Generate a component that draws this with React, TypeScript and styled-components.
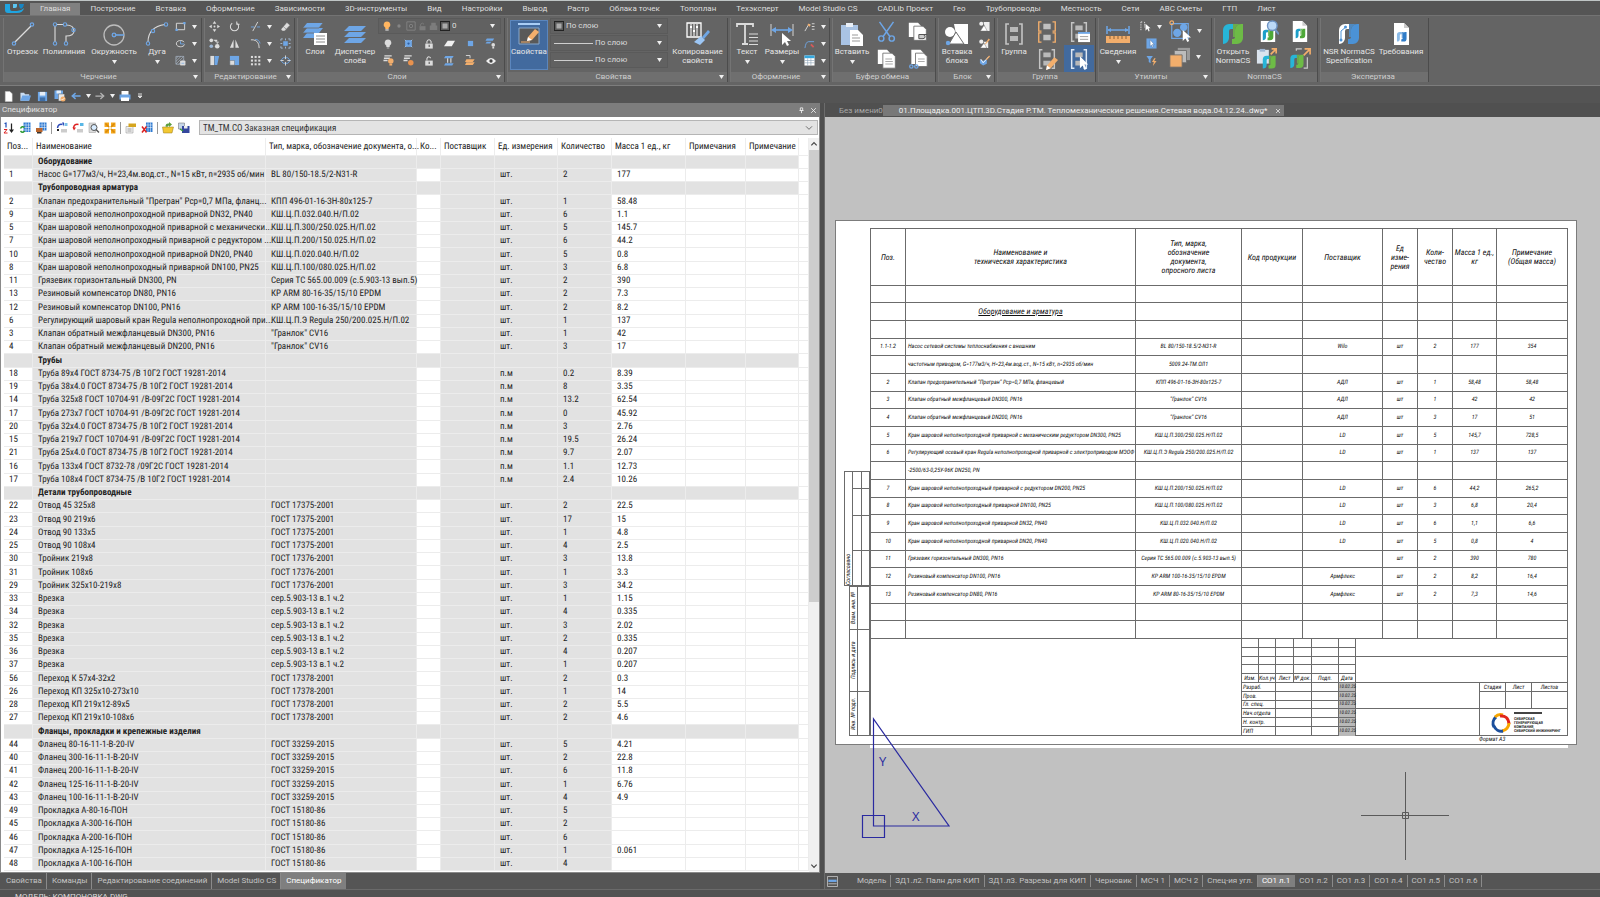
import React from "react";
import styled, { createGlobalStyle, css } from "styled-components";

/* ------------------------------------------------------------------ */
/* Theme                                                              */
/* ------------------------------------------------------------------ */

const uiFont = 'Roboto, "Noto Sans", sans-serif';
const gridFont = '"Roboto Condensed", Roboto, "Liberation Sans", sans-serif';
const LIGHT = "#dcdcdc";
const BLUE = "#6ea6e6";
const ORANGE = "#f2ae6c";
const INK = "#6b6b6b";

const GlobalStyle = createGlobalStyle`
  *, *::before, *::after { box-sizing: border-box; }
  body { margin: 0; background: #555; font: 8px/10px ${uiFont}; color: #dedede; }
  button, select, input { font: inherit; color: inherit; margin: 0; padding: 0; border: 0; background: none; }
  button { cursor: pointer; }
  a { color: inherit; text-decoration: none; }
  svg { display: block; flex: none; }
`;

const App$ = styled.div`
  display: flex;
  flex-direction: column;
  min-height: 100vh;
  overflow: hidden;
`;

/* ------------------------------------------------------------------ */
/* Icons                                                              */
/* ------------------------------------------------------------------ */

const bigDoc = (
  <>
    <path d="M5 1h10l5 5v17H5z" fill="#fff" />
    <path d="M15 1v5h5" fill="#ccc" />
  </>
);
const normaMark = (a: string, b: string) => (
  <>
    <path d="M2 22V8a6 6 0 0 1 6-6h4v5h-2a2 2 0 0 0-2 2v7a6 6 0 0 1-6 6z" fill={a} />
    <path d="M11 22v-5h1a2 2 0 0 0 2-2V8a6 6 0 0 1 6-6h2v14a6 6 0 0 1-6 6z" fill={b} />
    <path d="M12 2h8a6 6 0 0 0-6 6v7h-2z" fill={b} opacity=".8" />
  </>
);
const bracket = (c: string) => (
  <>
    <path d="M7 2H4v20h3M17 2h3v20h-3" fill="none" stroke={c} strokeWidth="1.6" />
    <path d="M8 5h8v5H8zM8 14h8v5H8z" fill="#b9b9b9" />
  </>
);
const cursor = <path d="M13 9v13l3-3 2 5 2-1-2-5h4z" fill="#fff" />;

const drawings: Record<string, React.ReactNode> = {
  line: (
    <g fill="none" stroke={LIGHT} strokeWidth="1.2">
      <path d="M4 20 20 4" />
      <g stroke={BLUE}><circle cx="3" cy="21.500" r="1.700" /><circle cx="21" cy="2.500" r="1.700" /></g>
    </g>
  ),
  polyline: (
    <g fill="none" stroke={LIGHT} strokeWidth="1.1">
      <path d="M3 20V4M5 2.500h7M14 3q8 0 8 6 0 5-8 5v6" />
      <g stroke={BLUE}><circle cx="3" cy="2.500" r="1.700" /><circle cx="3" cy="21.500" r="1.700" /><circle cx="13" cy="2.500" r="1.700" /><circle cx="21.500" cy="8" r="1.700" /><circle cx="14" cy="21.500" r="1.700" /></g>
    </g>
  ),
  circle: (
    <g fill="none" stroke="#bdbdbd" strokeWidth="1.3">
      <circle cx="12" cy="13" r="10" />
      <g stroke={BLUE}><circle cx="12" cy="13" r="1.800" fill={INK} /><path d="M14 13h8" strokeWidth="1.6" /></g>
    </g>
  ),
  arc: (
    <g fill="none" stroke={LIGHT} strokeWidth="1.1">
      <path d="M3 20Q3 5 20 2.500" />
      <g stroke={BLUE}><circle cx="3" cy="21.500" r="1.700" /><circle cx="8" cy="9" r="1.700" fill={INK} /><circle cx="21" cy="2.500" r="1.700" /></g>
    </g>
  ),
  rect: (
    <g fill="none" stroke={LIGHT} strokeWidth="2">
      <path d="M3 5h18v14H3z" />
      <g fill={BLUE} stroke="none"><path d="M1 17h5v5H1zM18 2h5v5h-5z" /></g>
    </g>
  ),
  ellipse: (
    <g fill="none" stroke={LIGHT} strokeWidth="2">
      <path d="M20 9C16 3 2 5 3 13s16 8 18 1" />
      <path d="M12 13V7M12 13h8" stroke={BLUE} />
    </g>
  ),
  hatch: (
    <g fill="none" stroke={LIGHT} strokeWidth="1.500">
      <path d="M2 3h17v17H2zM2 8l5-5M2 14 13 3M2 20 19 3M8 20 19 9" stroke="#a9b6c6" />
      <path d="M12 13h10v9H12z" fill={LIGHT} />
      <path d="M14 18h6" stroke={BLUE} />
    </g>
  ),
  move: (
    <g fill={LIGHT}>
      <path d="m12 0 4 6H8zM12 24l4-6H8zM0 12l6-4v8zM24 12l-6-4v8z" />
      <circle cx="12" cy="12" r="2" />
    </g>
  ),
  rotate: <path d="M7 5a9 9 0 1 0 10 0M17 1v6h6" fill="none" stroke={LIGHT} strokeWidth="2.200" />,
  trim: (
    <g fill="none" strokeWidth="2">
      <path d="M2 13h7M15 13h7" stroke={BLUE} /><path d="M6 22 17 2" stroke={LIGHT} />
    </g>
  ),
  eraser: <path d="M2 18 15 3l7 6L10 22H5zM7 12l7 6" fill={LIGHT} stroke={INK} strokeWidth="1.200" />,
  copy: (
    <g fill={LIGHT}>
      <circle cx="5" cy="5" r="4" /><circle cx="5" cy="18" r="4" fill="#9db7d6" /><circle cx="18" cy="18" r="5" /><path d="M9 4h9v7M14 8l4 5 4-5z" />
    </g>
  ),
  mirror: <path d="M10 3v18H2zM14 3v18h8z" fill={LIGHT} />,
  fillet: (
    <g fill="none" strokeWidth="2"><path d="M2 4h5q13 2 13 18" stroke={LIGHT} /><path d="M11 3q9 0 11 9" stroke={BLUE} /></g>
  ),
  explode: (
    <g><path d="M7 7h10v10H7z" fill={BLUE} /><path d="M2 2h4M2 2v4M22 2h-4M22 2v4M2 22h4M2 22v-4M22 22h-4M22 22v-4M12 1v4M12 19v4M1 12h4M19 12h4" stroke="#a7bdd6" strokeWidth="2" /></g>
  ),
  stretch: <g><path d="M3 2h8v20H3z" fill={LIGHT} /><path d="M12 2h10l-4 20h-6z" fill={BLUE} /></g>,
  scale: <g><path d="M2 2h20v20H2z" fill={BLUE} /><path d="M2 12h10v10H2z" fill={LIGHT} stroke={INK} /></g>,
  array: (
    <g fill={LIGHT}>{[2, 10, 18].map(x => [2, 10, 18].map(y => <rect key={`${x}-${y}`} x={x} y={y} width="4.500" height="4.500" />))}</g>
  ),
  break: <g fill="none" stroke={BLUE} strokeWidth="2"><path d="M7 6h10l5 6-5 6H7l-5-6z" /><path d="M12 1v8M12 15v8M1 12h7M16 12h7" stroke={LIGHT} /></g>,
  layers: (
    <g>
      <path d="M4 1h16l-4 5H0zM4 6h16l-4 5H0z" fill={BLUE} /><path d="M4 11h13l-4 5H0z" fill={BLUE} />
      <path d="M0 6h16l4-5M0 11h11" stroke={INK} strokeWidth=".8" fill="none" />
      <path d="M11 11h13v12H11z" fill="#fff" /><path d="M13 14h9M13 17h9M13 20h9" stroke="#8b8b8b" />
    </g>
  ),
  stack: <g fill={BLUE}><path d="M6 4h17l-5 5H1zM6 10h17l-5 5H1zM6 16h17l-5 5H1z" /></g>,
  bulb: (
    <g><path d="M12 1a8 8 0 0 1 4 15v3H8v-3a8 8 0 0 1 4-15z" fill="#ffb560" /><path d="M8 20h8v3H8z" fill={LIGHT} /></g>
  ),
  bulbOff: <g><path d="M12 1a8 8 0 0 1 4 15v3H8v-3a8 8 0 0 1 4-15z" fill={LIGHT} /><path d="M9 20h6v3H9z" fill="#aaa" /></g>,
  dot: <circle cx="12" cy="12" r="4" fill="#858585" />,
  dimFrame: <g fill="none" stroke="#858585" strokeWidth="2"><path d="M2 2h20v20H2z" /><circle cx="12" cy="12" r="4" /></g>,
  dimLock: <g fill="#7c7c7c"><path d="M4 11h16v11H4z" /><path d="M7 11V6q5-6 9 0" fill="none" stroke="#7c7c7c" strokeWidth="2.500" /></g>,
  dimPrint: <path d="M6 2h12v7h4v12H2V9h4z" fill="#7c7c7c" />,
  swatch: <g><path d="M1 1h22v22H1z" fill="#5a5a5a" stroke="#222" strokeWidth="2.500" /><path d="M6 6h12v12H6z" fill="#aaa" /></g>,
  freeze: <g><path d="M3 3h18v18H3z" fill={BLUE} /><circle cx="12" cy="12" r="3" fill="#2f5fa0" /><path d="M2 2l4 4M22 2l-4 4M2 22l4-4M22 22l-4-4" stroke="#a8c8ef" strokeWidth="2" /></g>,
  lock: <g fill={LIGHT}><path d="M3 11h18v12H3z" /><path d="M7 11V6q5-8 10 0v5" fill="none" stroke={LIGHT} strokeWidth="2.500" /><path d="M11 14h3v5h-3z" fill={INK} /></g>,
  unlock: <g fill={LIGHT}><path d="M3 11h18v12H3z" /><path d="M7 11V6q4-8 9-1" fill="none" stroke={LIGHT} strokeWidth="2.500" /><path d="M11 14h3v5h-3z" fill={INK} /></g>,
  slab: <path d="M8 6h16l-7 12H0z" fill="#f0f0f0" />,
  cube: <path d="M5 5h14v14H5z" fill={BLUE} />,
  layerPaint: <g><path d="M4 1h16l-3 5H1zM4 8h10l-3 4H1z" fill={BLUE} /><circle cx="18" cy="15" r="4" fill={LIGHT} /><path d="M16 19h4v4h-4z" fill={LIGHT} /></g>,
  layerBulb: <g><path d="M3 2h16M2 7h13M1 12h9" stroke={LIGHT} strokeWidth="3" /><circle cx="17" cy="13" r="6" fill={ORANGE} /><path d="M14 19h6v4h-6z" fill={ORANGE} /></g>,
  layerSun: <g><path d="M3 2h16M2 7h13M1 12h9" stroke={LIGHT} strokeWidth="3" /><circle cx="17" cy="17" r="6" fill="#e8924e" /></g>,
  layerJoin: <g><path d="M3 2h18l-3 5H0zM3 18h18l-3 5H0z" fill={BLUE} /><path d="M8 7v10M15 7v10" stroke={LIGHT} strokeWidth="2.500" /></g>,
  layerOpen: <g><path d="M3 9h18l-4 6H0zM3 16h18l-4 6H0z" fill={ORANGE} /><path d="M2 1h9v6" stroke={LIGHT} strokeWidth="2" fill="none" /></g>,
  eye: <g><path d="M0 12q12-15 24 0-12 15-24 0z" fill="#eee" /><circle cx="12" cy="12" r="4" fill="#444" /></g>,
  properties: (
    <g>
      <path d="M1 1h22v2H1z" fill="#a9cdf5" /><path d="M2 6h20v16H2z" fill="#595959" stroke="#88a8cc" />
      <path d="m11 15 7-8 4 3-7 8-5 1z" fill={ORANGE} /><path d="m11 15 4 3-5 1z" fill="#fff" /><path d="M4 20h9" stroke={ORANGE} />
    </g>
  ),
  matchProps: (
    <g>
      <path d="M1 1h14v14H1z" fill="none" stroke="#fff" strokeWidth="1.300" />
      <path d="M5 2v12M8 2v12M11 2v12" stroke="#fff" /><path d="M4 5h2M7 9h2M10 5h2" stroke="#fff" strokeWidth="2" />
      <path d="m22 8 2 2-6 7-2-2z" fill={BLUE} /><path d="M15 14 19 18 14 23 8 20z" fill="#9cc6f5" />
    </g>
  ),
  text: (
    <g fill="none" stroke={LIGHT} strokeWidth="1.800"><path d="M2 5V2h16v3M10 2v20M7 22h6" /><path d="M14 12h9M14 15.500h9M14 19h9M14 22.500h9" strokeWidth="1" /></g>
  ),
  dims: (
    <g><path d="M1 2v12M23 2v12" stroke="#bbb" strokeWidth="1.300" /><path d="M3 8h18" stroke={BLUE} strokeWidth="1.600" /><path d="m1 8 5-3v6zM23 8l-5-3v6z" fill={BLUE} /><path d="M12 11v12l3-3 2 4 2-1-2-4h4z" fill="#fff" /></g>
  ),
  leader: <g fill="none" stroke={LIGHT} strokeWidth="2"><path d="M2 22 10 8h4M17 6h6M17 12h6M17 18h6" /><path d="M9 7l4 4" stroke={ORANGE} strokeWidth="4" /></g>,
  spline: <g fill="none" strokeWidth="2"><path d="M2 22Q4 8 10 8h12" stroke={BLUE} /><path d="M15 14l6 6" stroke="#d65a5a" strokeWidth="4" /></g>,
  table: <g><path d="M1 1h22v22H1z" fill="#fff" /><path d="M1 1h22v6H1z" fill="#35a7dd" /><path d="M8 7v16M15 7v16M1 12h22M1 17h22" stroke="#8ba0b5" strokeWidth="1.300" /></g>,
  paste: (
    <g><path d="M1 3h17v20H1z" fill="#a9c3e4" /><path d="M6 1h7v4H6z" fill="#e9eff7" /><path d="M10 8h8l5 5v11H10z" fill="#fff" /><path d="M12 13h6M12 16h8M12 19h8" stroke="#999" /></g>
  ),
  cut: (
    <g fill="none" stroke={BLUE} strokeWidth="1.700"><path d="M4 1l12 17M20 1 8 18" /><circle cx="6" cy="20" r="3" /><circle cx="18" cy="20" r="3" /></g>
  ),
  copyLink: (
    <g><path d="M1 1h11l4 4v13H1z" fill="#fff" /><path d="M7 5h11l4 4v13H7z" fill="#fff" stroke={INK} /><path d="M13 15h5a2 2 0 0 1 0 5h-5zM18 15h5" fill="#ccc" stroke="#555" strokeWidth="1.200" /></g>
  ),
  copyDocs: (
    <g><path d="M1 1h11l4 4v13H1z" fill="#fff" /><path d="M7 5h11l4 4v14H7z" fill="#fff" stroke={INK} /><path d="M10 12h8M10 15h9M10 18h9" stroke="#999" /></g>
  ),
  cutDocs: (
    <g><path d="M4 1h11l4 4v13H4z" fill="#fff" /><path d="M9 5h10l4 4v12H9z" fill="#fff" stroke={INK} /><path d="M12 12h8M12 15h8" stroke="#999" /><circle cx="4" cy="21" r="2" fill="none" stroke={BLUE} strokeWidth="1.500" /><circle cx="10" cy="21" r="2" fill="none" stroke={BLUE} strokeWidth="1.500" /></g>
  ),
  block: (
    <g><path d="M9 2h14v20H13z" fill="#fff" /><circle cx="5" cy="10" r="5" fill="#fff" /><path d="m11 10 8 12H4z" fill="#fff" stroke={INK} /><circle cx="3" cy="21" r="2.200" fill={BLUE} /></g>
  ),
  blockSmall: <g><path d="M10 2h13v20h-9z" fill="#eee" /><circle cx="5" cy="6" r="4.500" fill="#eee" /><path d="m11 9 7 13H3z" fill="#fff" stroke={INK} /></g>,
  blockEdit: <g><path d="M10 8h10v14h-6z" fill="#eee" /><circle cx="5" cy="8" r="4.500" fill="#eee" /><path d="m11 11 6 11H3z" fill="#fff" stroke={INK} /><path d="m21 1 3 3-9 9-3 1z" fill={ORANGE} /></g>,
  blockCheck: <g><path d="M2 9l7 4 8-4v10l-8 4-7-5z" fill={BLUE} /><path d="m4 9 5 8L21 4" fill="none" stroke="#fff" strokeWidth="2" /><path d="m22 1 2 2-7 8-2-1z" fill={ORANGE} /></g>,
  group: bracket("#c4c4c4"),
  ungroup: (
    <g fill="none" stroke={ORANGE} strokeWidth="1.500"><path d="M6 1H3v10h3M18 1h3v10h-3M6 13H3v10h3M18 13h3v10h-3" /><path d="M8 3h8v6H8zM8 15h8v6H8z" fill="#c0c0c0" stroke="none" /></g>
  ),
  groupList: <g>{bracket("#c4c4c4")}<path d="M11 12h13v11H11z" fill="#fff" /><path d="M11 12h13v2H11z" fill={BLUE} /><path d="M13 17h9M13 20h9" stroke="#999" /></g>,
  groupEdit: <g>{bracket("#c4c4c4")}<path d="m20 10 4 3-8 9-5 2 1-5z" fill={ORANGE} /><path d="m12 19 4 3-5 2z" fill="#fff" /></g>,
  groupSelect: <g>{bracket("#dfe9f5")}{cursor}</g>,
  info: <g><path d="M1 4v8M23 4v8" stroke={BLUE} strokeWidth="1.500" /><path d="M2 8h20" stroke={BLUE} strokeWidth="1.500" /><path d="m1 8 4-2v4zM23 8l-4-2v4z" fill={BLUE} /><path d="M0 14h24v7H0z" fill={ORANGE} /><path d="M4 14v3M8 14v3M12 14v3M16 14v3M20 14v3" stroke="#8d6236" /></g>,
  quickSel: <g><path d="M2 2v20M2 2h4M10 2v12" stroke={LIGHT} strokeWidth="2" strokeDasharray="3 2" /><path d="M12 6v15l4-4 3 6 2-1-2-6h4z" fill="#fff" /></g>,
  pick: <g><path d="M1 1h22v22H1z" fill={BLUE} /><path d="M9 4v14l3-3 2 5 2-1-2-5h4z" fill="#fff" stroke="#3b5d8a" strokeWidth=".8" /></g>,
  filter: <g><path d="M1 2h14l-5 7v9l-4-3V9z" fill={BLUE} /><path d="m18 7-5 8h4l-2 9 8-11h-5l3-6z" fill={ORANGE} /></g>,
  isolate: <g><path d="M3 4h18v16H3z" fill="none" stroke={BLUE} strokeWidth="1.300" /><circle cx="9" cy="14" r="4.500" fill={BLUE} /><circle cx="16" cy="8" r="4" fill={BLUE} /><circle cx="3" cy="3" r="2" fill="none" stroke={ORANGE} strokeWidth="1.300" /><path d="M15 11v12l3-3 2 4 2-1-2-4h4z" fill="#fff" /></g>,
  order: <g><path d="M10 1h14v14H10z" fill="#9b9b9b" /><path d="M6 4h14v14H6z" fill="#bcbcbc" stroke={INK} /><path d="M1 9h14v14H1z" fill={ORANGE} stroke={INK} /></g>,
  norma: normaMark("#27b5d8", "#6dbb46"),
  normaSearch: <g>{bigDoc}<g transform="translate(6 9) scale(.55)">{normaMark("#1d9fc9", "#4ea838")}</g><circle cx="17" cy="6" r="5" fill="#bcd9f6" stroke="#6f94c4" strokeWidth="1.500" /><path d="m20 10 4 5" stroke="#6f94c4" strokeWidth="2" /></g>,
  normaDoc: <g>{bigDoc}<g transform="translate(7 8) scale(.5)">{normaMark("#1d9fc9", "#4ea838")}</g></g>,
  normaPaste: <g><path d="M1 2h13v15H1z" fill="#dbe4ee" /><path d="M4 1h6v3H4z" fill="#9fb7d4" /><g transform="translate(6 7) scale(.7)">{normaMark("#27b5d8", "#6dbb46")}</g><path d="m16 7 6-6M17 1h5v5" stroke={ORANGE} strokeWidth="1.800" fill="none" /></g>,
  normaLink: <g><path d="M8 3V1h6M20 10v12h-4" stroke="#ccc" strokeWidth="1.300" fill="none" /><g transform="translate(0 6) scale(.72)">{normaMark("#27b5d8", "#6dbb46")}</g><path d="m16 8 6-6M17 1h6v6" stroke={ORANGE} strokeWidth="1.800" fill="none" /></g>,
  nsr: <g>{normaMark("#fff", "#4b92d6")}<path d="M4 19V9l5-4" stroke="#4b92d6" fill="none" /><circle cx="4" cy="18" r="1.500" fill="#4b92d6" /><circle cx="8.500" cy="5" r="1.500" fill="#4b92d6" /></g>,
  requirements: <g>{bigDoc}<g transform="translate(7 9) scale(.48)">{normaMark("#8bbbe8", "#2f7cc8")}</g></g>,
  file: <path d="M5 1h10l5 5v17H5z" fill="#fff" stroke="#ccc" />,
  open: <g><path d="M1 4h8l2 3h9v14H1z" fill="#c9ddf3" /><path d="M5 10h19l-4 11H1z" fill={BLUE} /></g>,
  save: <g><path d="M2 2h20v20H2z" fill={BLUE} /><path d="M6 2h12v8H6z" fill="#e6eef7" /><path d="M6 14h12v8H6z" fill="#3f6ea6" /></g>,
  saveAll: <g><path d="M1 1h17v17H1z" fill={BLUE} /><path d="M5 1h9v6H5z" fill="#e6eef7" /><path d="M9 8h12v14H9z" fill="#e8e8e8" stroke="#666" /><circle cx="18" cy="18" r="5" fill={ORANGE} /><path d="m15 18 2 2 4-4" stroke="#fff" strokeWidth="1.500" fill="none" /></g>,
  undo: <path d="M23 12H6M11 5l-8 7 8 7" fill="none" stroke={BLUE} strokeWidth="3.500" />,
  redo: <path d="M1 12h17M13 5l8 7-8 7" fill="none" stroke="#b5b5b5" strokeWidth="3" />,
  print: <g><path d="M5 2h14v8H5z" fill="#fff" /><path d="M1 9h22v10H1z" fill={BLUE} /><path d="M4 15h16v7H4z" fill="#fff" /></g>,
  chevrons: <path d="M6 6h12M6 12h12l-6 6z" stroke="#ddd" strokeWidth="3" fill="#ddd" />,
  sort: <g><path d="M3 3l3-1v9" stroke="#2352b8" strokeWidth="2.500" fill="none" /><path d="M2 15h6l-6 7h7" stroke="#d22" strokeWidth="2" fill="none" /><path d="M17 3v16" stroke="#222" strokeWidth="2.500" /><path d="m12 15 5 7 5-7z" fill="#222" /></g>,
  gridRefresh: <g><path d="M9 1h14v19H9z" fill="#2f7bd2" /><path d="M9 6h14M9 11h14M9 16h14M14 1v19M19 1v19" stroke="#fff" /><path d="M3 13q3-6 8-2M11 18q-4 5-8 0" stroke="#2c9a32" strokeWidth="3" fill="none" /></g>,
  gridSave: <g><path d="M9 1h14v16H9z" fill="#2f7bd2" /><path d="M9 6h14M9 11h14M14 1v16M19 1v16" stroke="#fff" /><path d="M2 12h13v8H2z" fill="#b9652c" /><path d="M4 20h9v3H4z" fill="#333" /></g>,
  linkBlue: <g><path d="M3 12Q4 3 13 5" stroke="#2a48b8" strokeWidth="3" fill="none" /><path d="M12 1h4v8z" fill="#2a48b8" /><path d="M17 2h6v6h-6z" fill="#7cc1e8" /><path d="M2 14h4v4H2z" fill="#222" /><path d="M10 14h12v7H10z" fill="#ccc" /></g>,
  linkRed: <g><path d="M3 12Q4 3 13 5" stroke="#d22" strokeWidth="3" fill="none" /><path d="m1 11 7 0-4 6z" fill="#d22" /><path d="M16 2h7v6h-7z" fill="#58b7e6" /><path d="M10 14h12v7H10z" fill="#ccc" /></g>,
  inspect: <g><path d="M2 2h13v19H2z" fill="#dcdcdc" stroke="#999" /><circle cx="12" cy="11" r="6" fill="#d8ecff" stroke="#555" strokeWidth="2" /><path d="m16 15 6 6" stroke="#555" strokeWidth="3" /></g>,
  tiles: <g fill="#f5a81c"><path d="M1 1h9v9H1zM14 1h9v9h-9zM1 14h9v9H1zM14 14h9v9h-9z" /><path d="m3 3 18 18M21 3 3 21" stroke="#d98a0a" strokeWidth="3" /><circle cx="12" cy="12" r="3" fill="#fff3c9" /></g>,
  props: <g><path d="M2 9h14v13H2z" fill="#f1f1f1" stroke="#888" /><path d="M7 3h15v7H7z" fill="#d5a51f" /><path d="M5 14h8M5 18h8" stroke="#888" strokeWidth="1.500" /></g>,
  gridX: <g><path d="M10 1h13v19H10z" fill="#2f7bd2" /><path d="M10 6h13M10 11h13M14 1v19M19 1v19" stroke="#fff" /><path d="m2 9 9 12M11 9 2 21" stroke="#d22" strokeWidth="3" /></g>,
  folderUp: <g><path d="M1 10h22l-3 12H3z" fill="#f2c832" stroke="#96761a" /><path d="M7 9q0-7 7-6v-3l6 5-6 5V7q-3 0-3 3z" fill="#5d9e3f" /></g>,
  export: <g><path d="M1 2h12v12H1z" fill="#c7d6e8" stroke="#666" /><path d="M8 8h15v14H8z" fill="#35479e" /><path d="M12 8h7v5h-7z" fill="#eee" /><path d="M4 14l6 4" stroke="#3a9a3a" strokeWidth="3" /></g>,
  sheets: <g><path d="M1 1h22v22H1z" fill="#555" stroke="#bbb" strokeWidth="2" /><path d="M3 8h18v5H3z" fill={BLUE} /><path d="M3 17h18" stroke="#bbb" strokeWidth="2" /></g>,
  pin: <path d="M8 3h8v9H8zM5 12h14M12 12v9" fill="none" stroke="#eee" strokeWidth="3" />,
  close: <path d="m4 4 16 16M20 4 4 20" stroke="#eee" strokeWidth="3" />,
  chevDown: <path d="m3 7 9 9 9-9" fill="none" stroke="#555" strokeWidth="2.500" />,
  up: <path d="m4 16 8-8 8 8" fill="none" stroke="#444" strokeWidth="3.500" />,
  down: <path d="m4 8 8 8 8-8" fill="none" stroke="#444" strokeWidth="3.500" />,
};

const Icon = ({ name, size = 12 }: { name: string; size?: number }) => (
  <svg width={size} height={size} viewBox="0 0 24 24" aria-hidden="true">{drawings[name]}</svg>
);
const Caret = () => (
  <svg width="5" height="4" viewBox="0 0 5 4" aria-hidden="true"><path d="M0 0h5L2.500 4z" fill="#f0f0f0" /></svg>
);

/* ------------------------------------------------------------------ */
/* Ribbon                                                             */
/* ------------------------------------------------------------------ */

const MenuBar = styled.header`
  display: flex;
  height: 15px;
  background: #555;
  border-top: 1px solid #bfc5c5;
`;
const LogoButton = styled.button`
  width: 30px;
  height: 14px;
  padding-left: 4px;
  background: #555;
`;
const MenuTabs = styled.nav`
  display: flex;
  padding-top: 2px;
`;
const MenuTab = styled.a<{ $active?: boolean }>`
  height: 12px;
  padding: 0 10px;
  line-height: 12px;
  white-space: nowrap;
  background: ${p => (p.$active ? "#808080" : "none")};
`;
const RibbonBar = styled.div`
  display: flex;
  gap: 2px;
  height: 71px;
  padding: 2px 3px 3px;
  background: #646464;
  border-top: 1px solid #737373;
  border-bottom: 1px solid #7d7d7d;
`;
const GroupBox = styled.section<{ $w: number }>`
  display: flex;
  flex-direction: column;
  flex: 0 0 ${p => p.$w}px;
  border-right: 1px solid #4c4c4c;
  border-left: 1px solid #747474;
`;
const GroupBody = styled.div<{ $pad?: number }>`
  display: flex;
  flex: 1;
  padding-left: ${p => p.$pad ?? 0}px;
`;
const GroupTitle = styled.h2`
  display: flex;
  align-items: center;
  height: 10px;
  margin: 0;
  padding-right: 3px;
  background: #6f6f6f;
  font-size: 8px;
  font-weight: 400;
  line-height: 10px;
  color: #cfcfcf;
  & > span { flex: 1; text-align: center; }
`;
const BigButton = styled.button<{ $w: number; $active?: boolean }>`
  display: flex;
  flex-direction: column;
  align-items: center;
  width: ${p => p.$w}px;
  height: 50px;
  margin-top: 2px;
  padding-top: 2px;
  gap: 1px;
  line-height: 9px;
  color: #e6e6e6;
  ${p => p.$active && css`background: #426a9e; outline: 1px solid #5b86bd; outline-offset: -1px;`}
  & > svg:last-child:not(:first-child) { margin-top: 3px; }
`;
const ToolGrid = styled.div<{ $cols: string; $row?: number }>`
  display: grid;
  grid-template-columns: ${p => p.$cols};
  grid-auto-rows: ${p => p.$row ?? 17}px;
`;
const ToolButton = styled.button<{ $active?: boolean }>`
  display: flex;
  align-items: center;
  justify-content: center;
  gap: 6px;
  ${p => p.$active && css`background: #426a9e;`}
`;
const LayerPane = styled.div`
  display: flex;
  flex-direction: column;
  flex: 1;
  padding-right: 3px;
`;
const Combo = styled.label`
  display: flex;
  align-items: center;
  gap: 2px;
  height: 16px;
  margin-bottom: 1px;
  padding: 0 5px 0 3px;
  border: 1px solid #5a5a5a;
  background: #616161;
`;
const PlainSelect = styled.select`
  appearance: none;
  flex: 1;
  min-width: 0;
  outline: 0;
  line-height: 12px;
`;
const LineSample = styled.span`
  width: 39px;
  height: 1px;
  background: #cfcfcf;
`;
const ComboStack = styled.div`
  display: flex;
  flex-direction: column;
  width: 118px;
  margin-left: 2px;
`;
const IconLabel = styled.span`
  text-align: center;
  white-space: pre-line;
`;

const Big = (p: { icon: string; text: string; w: number; caret?: boolean; active?: boolean }) => (
  <BigButton type="button" $w={p.w} $active={p.active}>
    <Icon name={p.icon} size={24} />
    <IconLabel>{p.text}</IconLabel>
    {p.caret && <Caret />}
  </BigButton>
);
const Tool = (p: { icon: string; size?: number; caret?: boolean; active?: boolean }) => (
  <ToolButton type="button" aria-label={p.icon} $active={p.active}>
    <Icon name={p.icon} size={p.size ?? 11} />
    {p.caret && <Caret />}
  </ToolButton>
);
const Group = (p: { w: number; title: string; more?: boolean; pad?: number; children: React.ReactNode }) => (
  <GroupBox $w={p.w}>
    <GroupBody $pad={p.pad}>{p.children}</GroupBody>
    <GroupTitle><span>{p.title}</span>{p.more && <Caret />}</GroupTitle>
  </GroupBox>
);

const menu = ["Главная", "Построение", "Вставка", "Оформление", "Зависимости", "3D-инструменты", "Вид", "Настройки", "Вывод", "Растр", "Облака точек", "Топоплан", "Техэксперт", "Model Studio CS", "CADLib Проект", "Гео", "Трубопроводы", "Местность", "Сети", "АВС Сметы", "ГТП", "Лист"];

const Ribbon = () => (
  <>
    <MenuBar>
      <LogoButton type="button" aria-label="Меню приложения">
        <svg width="20" height="9" viewBox="0 0 20 9">
          <path d="M1 0h5v5q0 2 2 2h5q4 0 7-3-1 5-7 5H4Q1 9 1 6z" fill="#1fa4e0" />
          <path d="M9 0h4v2q0 2-2 2H9z" fill="#5cc6f2" />
          <path d="M15 0h5q0 3-3 5-2-1-2-5z" fill="#1786c4" />
        </svg>
      </LogoButton>
      <MenuTabs>
        {menu.map((m, i) => <MenuTab key={m} href="#" $active={i === 0}>{m}</MenuTab>)}
      </MenuTabs>
    </MenuBar>
    <RibbonBar>
      <Group w={199} title="Черчение" more>
        <Big icon="line" text="Отрезок" w={37} />
        <Big icon="polyline" text="Полилиния" w={46} />
        <Big icon="circle" text="Окружность" w={54} caret />
        <Big icon="arc" text="Дуга" w={32} caret />
        <ToolGrid $cols="26px">
          <Tool icon="rect" caret /><Tool icon="ellipse" caret /><Tool icon="hatch" caret />
        </ToolGrid>
      </Group>
      <Group w={91} title="Редактирование" more>
        <ToolGrid $cols="18px 22px 31px 18px">
          <Tool icon="move" /><Tool icon="rotate" /><Tool icon="trim" caret /><Tool icon="eraser" />
          <Tool icon="copy" /><Tool icon="mirror" /><Tool icon="fillet" caret /><Tool icon="explode" />
          <Tool icon="stretch" /><Tool icon="scale" /><Tool icon="array" caret /><Tool icon="break" />
        </ToolGrid>
      </Group>
      <Group w={208} title="Слои" more>
        <Big icon="layers" text="Слои" w={34} />
        <Big icon="stack" text={"Диспетчер\nслоёв"} w={46} />
        <LayerPane>
          <Combo>
            <Icon name="bulb" size={10} /><Icon name="dot" size={10} /><Icon name="dimFrame" size={10} />
            <Icon name="dimLock" size={9} /><Icon name="dimPrint" size={9} /><Icon name="swatch" size={10} />
            <PlainSelect aria-label="Текущий слой"><option>0</option></PlainSelect>
            <Caret />
          </Combo>
          <ToolGrid $cols="repeat(6, 1fr)">
            <Tool icon="bulbOff" size={10} /><Tool icon="freeze" size={9} /><Tool icon="lock" size={10} /><Tool icon="slab" /><Tool icon="cube" size={9} /><Tool icon="layerPaint" />
            <Tool icon="layerBulb" /><Tool icon="layerSun" /><Tool icon="unlock" size={10} /><Tool icon="layerJoin" /><Tool icon="layerOpen" /><Tool icon="eye" size={10} />
          </ToolGrid>
        </LayerPane>
      </Group>
      <Group w={221} title="Свойства" more pad={2}>
        <Big icon="properties" text="Свойства" w={38} active />
        <ComboStack>
          <Combo><Icon name="swatch" size={10} /><PlainSelect aria-label="Цвет"><option>По слою</option></PlainSelect><Caret /></Combo>
          <Combo><LineSample /><PlainSelect aria-label="Тип линии"><option>По слою</option></PlainSelect><Caret /></Combo>
          <Combo><LineSample /><PlainSelect aria-label="Вес линии"><option>По слою</option></PlainSelect><Caret /></Combo>
        </ComboStack>
        <Big icon="matchProps" text={"Копирование\nсвойств"} w={59} />
      </Group>
      <Group w={100} title="Оформление" more>
        <Big icon="text" text="Текст" w={32} caret />
        <Big icon="dims" text="Размеры" w={38} caret />
        <ToolGrid $cols="27px">
          <Tool icon="leader" caret /><Tool icon="spline" caret /><Tool icon="table" caret />
        </ToolGrid>
      </Group>
      <Group w={104} title="Буфер обмена">
        <Big icon="paste" text="Вставить" w={38} caret />
        <ToolGrid $cols="31px 31px" $row={27}>
          <Tool icon="cut" size={21} /><Tool icon="copyLink" size={20} /><Tool icon="copyDocs" size={20} /><Tool icon="cutDocs" size={20} />
        </ToolGrid>
      </Group>
      <Group w={57} title="Блок" more>
        <Big icon="block" text={"Вставка\nблока"} w={36} />
        <ToolGrid $cols="18px">
          <Tool icon="blockSmall" /><Tool icon="blockEdit" /><Tool icon="blockCheck" />
        </ToolGrid>
      </Group>
      <Group w={99} title="Группа">
        <Big icon="group" text="Группа" w={32} />
        <ToolGrid $cols="34px 30px" $row={27}>
          <Tool icon="ungroup" size={22} /><Tool icon="groupList" size={22} /><Tool icon="groupEdit" size={22} /><Tool icon="groupSelect" size={22} active />
        </ToolGrid>
      </Group>
      <Group w={114} title="Утилиты" more>
        <Big icon="info" text="Сведения" w={38} caret />
        <ToolGrid $cols="28px">
          <Tool icon="quickSel" caret /><Tool icon="pick" /><Tool icon="filter" />
        </ToolGrid>
        <ToolGrid $cols="40px" $row={26}>
          <Tool icon="isolate" size={22} caret /><Tool icon="order" size={21} caret />
        </ToolGrid>
      </Group>
      <Group w={104} title="NormaCS">
        <Big icon="norma" text={"Открыть\nNormaCS"} w={36} />
        <ToolGrid $cols="32px 33px" $row={27}>
          <Tool icon="normaSearch" size={23} /><Tool icon="normaDoc" size={23} /><Tool icon="normaPaste" size={22} /><Tool icon="normaLink" size={22} />
        </ToolGrid>
      </Group>
      <Group w={109} title="Экспертиза" pad={1}>
        <Big icon="nsr" text={"NSR NormaCS\nSpecification"} w={54} />
        <Big icon="requirements" text="Требования" w={50} />
      </Group>
    </RibbonBar>
  </>
);

const QuickBar = styled.div`
  display: flex;
  align-items: center;
  gap: 4px;
  height: 17px;
  padding: 3px 3px 0;
  background: #545454;
`;
const QuickButton = styled.button`
  display: flex;
  align-items: center;
  gap: 5px;
  min-width: 13px;
`;

/* ------------------------------------------------------------------ */
/* Specification panel                                                */
/* ------------------------------------------------------------------ */

const Workspace = styled.main`
  display: grid;
  grid-template-columns: minmax(0, 820fr) 5px minmax(0, 775fr);
  flex: 1;
`;
const Splitter = styled.div`
  background: #4f4f4f;
  border-right: 1px solid #6c6c6c;
`;
const LeftPane = styled.section`
  display: flex;
  flex-direction: column;
  min-width: 0;
`;
const PaneTitle = styled.div`
  display: flex;
  align-items: center;
  gap: 3px;
  height: 14px;
  padding: 0 2px;
  background: #7d7d7d;
  color: #e2e2e2;
  & > h1 { flex: 1; margin: 0; font-size: 8px; font-weight: 400; line-height: 14px; }
`;
const TitleButton = styled.button`
  padding: 1px;
`;
const SpecPanel = styled.div`
  display: flex;
  flex-direction: column;
  flex: 1;
  border: 1px solid #8a8a8a;
  border-top: 0;
  background: #fff;
  color: #333;
`;
const SpecToolbar = styled.div`
  display: flex;
  align-items: center;
  gap: 4px;
  height: 21px;
  padding: 0 1px 0 2px;
`;
const SpecButton = styled.button`
  width: 12px;
`;
const Divider = styled.span`
  width: 1px;
  height: 12px;
  background: #999;
`;
const DocSelect = styled.label`
  display: flex;
  align-items: center;
  flex: 1;
  height: 15px;
  margin-left: 5px;
  padding: 0 4px 0 3px;
  border: 1px solid #b5b5b5;
  background: #e3e3e3;
  font: 9px/13px ${gridFont};
`;
const SpecScroll = styled.div`
  display: flex;
  flex: 1;
  padding-left: 3px;
`;
const SpecTable = styled.table`
  flex: 1;
  width: 0;
  table-layout: fixed;
  border-collapse: separate;
  border-spacing: 0;
  align-self: flex-start;
  font: 9px/12px ${gridFont};
  text-rendering: geometricPrecision;
  color: #222;
`;
const SpecHead = styled.th`
  height: 18px;
  padding: 0 0 0 3px;
  border-right: 1px solid #ededed;
  border-bottom: 1px solid #ededed;
  font-weight: 400;
  text-align: left;
  white-space: nowrap;
`;
const SpecRow = styled.tr<{ $section?: boolean }>`
  height: 13px;
  &:nth-child(4n) { height: 14px; }
  & > td {
    padding: 0 0 0 5px;
    border-right: 1px solid #ececec;
    border-bottom: 1px solid #ececec;
    white-space: nowrap;
    background: ${p => (p.$section ? "#e2e2e2" : "#fff")};
    font-weight: ${p => (p.$section ? 700 : 400)};
  }
  & > td:nth-child(2), & > td:nth-child(3), & > td:nth-child(5), & > td:nth-child(6), & > td:nth-child(7) { background: #e2e2e2; }
  & > td:last-child { background: #fff; }
`;
const ScrollTrack = styled.div`
  display: flex;
  flex-direction: column;
  width: 10px;
  background: #f0f0f0;
`;
const ScrollButton = styled.button`
  display: flex;
  align-items: center;
  justify-content: center;
  height: 12px;
`;
const ScrollThumb = styled.div`
  flex: 452;
  background: #cdcdcd;
`;
const ScrollRest = styled.div`
  flex: 258;
`;

const specCols = [29, 233, 151, 24, 54, 63, 54, 74, 60, 53];
const specHeads = ["Поз...", "Наименование", "Тип, марка, обозначение документа, о...", "Ко...", "Поставщик", "Ед. измерения", "Количество", "Масса 1 ед., кг", "Примечания", "Примечание"];

const specText = `#Оборудование
1|Насос G=177м3/ч, Н=23,4м.вод.ст., N=15 кВт, n=2935 об/мин|BL 80/150-18.5/2-N31-R|шт.|2|177
#Трубопроводная арматура
2|Клапан предохранительный "Прегран" Рср=0,7 МПа, фланц...|КПП 496-01-16-ЗН-80х125-7|шт.|1|58.48
9|Кран шаровой неполнопроходной приварной DN32, PN40|КШ.Ц.П.032.040.Н/П.02|шт.|6|1.1
5|Кран шаровой неполнопроходной приварной с механически...|КШ.Ц.П.300/250.025.Н/П.02|шт.|5|145.7
7|Кран шаровой неполнопроходный приварной с редуктором ...|КШ.Ц.П.200/150.025.Н/П.02|шт.|6|44.2
10|Кран шаровой неполнопроходной приварной DN20, PN40|КШ.Ц.П.020.040.Н/П.02|шт.|5|0.8
8|Кран шаровой неполнопроходный приварной DN100, PN25|КШ.Ц.П.100/080.025.Н/П.02|шт.|3|6.8
11|Грязевик горизонтальный DN300, PN|Серия ТС 565.00.009 (с.5.903-13 вып.5)|шт.|2|390
13|Резиновый компенсатор DN80, PN16|КР ARM 80-16-35/15/10 EPDM|шт.|2|7.3
12|Резиновый компенсатор DN100, PN16|КР ARM 100-16-35/15/10 EPDM|шт.|2|8.2
6|Регулирующий шаровый кран Regula неполнопроходной при...|КШ.Ц.П.Э Regula 250/200.025.Н/П.02|шт.|1|137
3|Клапан обратный межфланцевый DN300, PN16|"Гранлок" CV16|шт.|1|42
4|Клапан обратный межфланцевый DN200, PN16|"Гранлок" CV16|шт.|3|17
#Трубы
18|Труба 89х4 ГОСТ 8734-75 /В 10Г2 ГОСТ 19281-2014||п.м|0.2|8.39
19|Труба 38х4.0 ГОСТ 8734-75 /В 10Г2 ГОСТ 19281-2014||п.м|8|3.35
14|Труба 325х8 ГОСТ 10704-91 /В-09Г2С ГОСТ 19281-2014||п.м|13.2|62.54
17|Труба 273х7 ГОСТ 10704-91 /В-09Г2С ГОСТ 19281-2014||п.м|0|45.92
20|Труба 32х4.0 ГОСТ 8734-75 /В 10Г2 ГОСТ 19281-2014||п.м|3|2.76
15|Труба 219х7 ГОСТ 10704-91 /В-09Г2С ГОСТ 19281-2014||п.м|19.5|26.24
21|Труба 25х4.0 ГОСТ 8734-75 /В 10Г2 ГОСТ 19281-2014||п.м|9.7|2.07
16|Труба 133х4 ГОСТ 8732-78 /09Г2С ГОСТ 19281-2014||п.м|1.1|12.73
17|Труба 108х4 ГОСТ 8734-75 /В 10Г2 ГОСТ 19281-2014||п.м|2.4|10.26
#Детали трубопроводные
22|Отвод 45 325х8|ГОСТ 17375-2001|шт.|2|22.5
23|Отвод 90 219х6|ГОСТ 17375-2001|шт.|17|15
24|Отвод 90 133х5|ГОСТ 17375-2001|шт.|1|4.8
25|Отвод 90 108х4|ГОСТ 17375-2001|шт.|4|2.5
30|Тройник 219х8|ГОСТ 17376-2001|шт.|3|13.8
31|Тройник 108х6|ГОСТ 17376-2001|шт.|1|3.3
29|Тройник 325х10-219х8|ГОСТ 17376-2001|шт.|3|34.2
33|Врезка|сер.5.903-13 в.1 ч.2|шт.|1|1.15
34|Врезка|сер.5.903-13 в.1 ч.2|шт.|4|0.335
32|Врезка|сер.5.903-13 в.1 ч.2|шт.|3|2.02
35|Врезка|сер.5.903-13 в.1 ч.2|шт.|2|0.335
36|Врезка|сер.5.903-13 в.1 ч.2|шт.|4|0.207
37|Врезка|сер.5.903-13 в.1 ч.2|шт.|1|0.207
56|Переход К 57х4-32х2|ГОСТ 17378-2001|шт.|2|0.3
26|Переход КП 325х10-273х10|ГОСТ 17378-2001|шт.|1|14
28|Переход КП 219х12-89х5|ГОСТ 17378-2001|шт.|2|5.5
27|Переход КП 219х10-108х6|ГОСТ 17378-2001|шт.|2|4.6
#Фланцы, прокладки и крепежные изделия
44|Фланец 80-16-11-1-В-20-IV|ГОСТ 33259-2015|шт.|5|4.21
40|Фланец 300-16-11-1-В-20-IV|ГОСТ 33259-2015|шт.|2|22.8
41|Фланец 200-16-11-1-В-20-IV|ГОСТ 33259-2015|шт.|6|11.8
42|Фланец 125-16-11-1-В-20-IV|ГОСТ 33259-2015|шт.|1|6.76
43|Фланец 100-16-11-1-В-20-IV|ГОСТ 33259-2015|шт.|4|4.9
49|Прокладка А-80-16-ПОН|ГОСТ 15180-86|шт.|5|
45|Прокладка А-300-16-ПОН|ГОСТ 15180-86|шт.|2|
46|Прокладка А-200-16-ПОН|ГОСТ 15180-86|шт.|6|
47|Прокладка А-125-16-ПОН|ГОСТ 15180-86|шт.|1|0.061
48|Прокладка А-100-16-ПОН|ГОСТ 15180-86|шт.|4|`;

const specRows = specText.split("\n").map(l =>
  l[0] === "#"
    ? { section: true, cells: ["", l.slice(1), "", "", "", "", "", "", "", "", ""] }
    : (() => {
        const [n, name, type, unit, qty, mass] = l.split("|");
        return { section: false, cells: [n, name, type, "", "", unit, qty, mass, "", "", ""] };
      })()
);

const specTools = ["sort", "gridRefresh", "gridSave", "|", "linkBlue", "linkRed", "inspect", "tiles", "|", "props", "gridX", "|", "folderUp", "export"];

const DockTabs = styled.div`
  display: flex;
  height: 16px;
  padding-left: 1px;
  background: #555;
`;
const DockTab = styled.button<{ $active?: boolean }>`
  height: 16px;
  padding: 0 4px 0 5px;
  border-right: 1px solid ${p => (p.$active ? "transparent" : "#8a8a8a")};
  white-space: nowrap;
  line-height: 16px;
  color: ${p => (p.$active ? "#fff" : "#c4c4c4")};
  background: ${p => (p.$active ? "#7f7f7f" : "none")};
`;

const Specification = () => (
  <LeftPane>
    <PaneTitle>
      <h1>Спецификатор</h1>
      <TitleButton type="button" aria-label="Закрепить"><Icon name="pin" size={7} /></TitleButton>
      <TitleButton type="button" aria-label="Закрыть панель"><Icon name="close" size={7} /></TitleButton>
    </PaneTitle>
    <SpecPanel>
      <SpecToolbar>
        {specTools.map((t, i) => t === "|"
          ? <Divider key={i} />
          : <SpecButton key={i} type="button" aria-label={t}><Icon name={t} size={12} /></SpecButton>)}
        <DocSelect>
          <PlainSelect aria-label="Документ"><option>ТМ_ТМ.СО Заказная спецификация</option></PlainSelect>
          <Icon name="chevDown" size={8} />
        </DocSelect>
      </SpecToolbar>
      <SpecScroll>
        <SpecTable>
          <colgroup>{specCols.map((w, i) => <col key={i} width={w} />)}<col /></colgroup>
          <thead><tr>{specHeads.map(h => <SpecHead key={h}>{h}</SpecHead>)}<SpecHead /></tr></thead>
          <tbody>
            {specRows.map((r, i) => (
              <SpecRow key={i} $section={r.section}>{r.cells.map((c, j) => <td key={j}>{c}</td>)}</SpecRow>
            ))}
          </tbody>
        </SpecTable>
        <ScrollTrack>
          <ScrollButton type="button" aria-label="Вверх"><Icon name="up" size={8} /></ScrollButton>
          <ScrollThumb />
          <ScrollRest />
          <ScrollButton type="button" aria-label="Вниз"><Icon name="down" size={8} /></ScrollButton>
        </ScrollTrack>
      </SpecScroll>
    </SpecPanel>
    <DockTabs>
      {["Свойства", "Команды", "Редактирование соединений", "Model Studio CS", "Спецификатор"].map((t, i) => (
        <DockTab key={t} type="button" $active={i === 4}>{t}</DockTab>
      ))}
    </DockTabs>
  </LeftPane>
);

/* ------------------------------------------------------------------ */
/* Drawing area                                                       */
/* ------------------------------------------------------------------ */

const RightPane = styled.section`
  display: flex;
  flex-direction: column;
  min-width: 0;
`;
const FileTabs = styled.div`
  display: flex;
  align-items: flex-start;
  height: 14px;
  padding: 2px 0 0 3px;
  background: #505050;
`;
const FileTab = styled.div<{ $active?: boolean }>`
  display: flex;
  align-items: center;
  height: 11px;
  padding: 0 ${p => (p.$active ? 3 : 0)}px 0 ${p => (p.$active ? 16 : 11)}px;
  gap: 8px;
  white-space: nowrap;
  color: ${p => (p.$active ? "#f0f0f0" : "#a8a8a8")};
  background: ${p => (p.$active ? "#787878" : "none")};
`;
const Canvas = styled.div`
  position: relative;
  flex: 1;
  overflow: hidden;
  background: #c1c1c1;
`;
const SheetShadow = styled.div`
  position: absolute;
  left: 45px;
  top: 600px;
  width: 698px;
  height: 31px;
  background: #fff;
`;
const Sheet = styled.article`
  position: absolute;
  left: 10px;
  top: 103px;
  display: flex;
  align-items: flex-end;
  width: 742px;
  height: 525px;
  padding: 7px 8px 0;
  border: 1px solid #7c7c7c;
  background: #fff;
  color: #111;
  font: italic 6px/8px ${gridFont};
  text-rendering: geometricPrecision;
`;
const Stamps = styled.div`
  display: flex;
  flex-direction: column;
  align-items: flex-end;
  width: 26px;
  margin-bottom: 8px;
`;
const StampGrid = styled.div<{ $cols: string; $rows: string }>`
  display: grid;
  grid-template-columns: ${p => p.$cols};
  grid-template-rows: ${p => p.$rows};
  border-left: 1px solid ${INK};
  border-top: 1px solid ${INK};
`;
const StampCell = styled.div<{ $span?: boolean }>`
  border-right: 1px solid ${INK};
  border-bottom: 1px solid ${INK};
  ${p => p.$span && css`grid-row: 1 / -1;`}
`;
const StampLabel = styled(StampCell)<{ $end?: boolean }>`
  display: flex;
  align-items: center;
  justify-content: ${p => (p.$end ? "flex-start" : "center")};
  writing-mode: vertical-rl;
  text-orientation: sideways;
  transform: rotate(180deg);
  border: 0;
  border-left: 1px solid ${INK};
  border-top: 1px solid ${INK};
  white-space: nowrap;
`;
const SheetBody = styled.div`
  flex: 1;
  min-width: 0;
`;
const Frame = styled.div`
  border-left: 1px solid ${INK};
  border-top: 1px solid ${INK};
`;
const SheetTable = styled.table`
  width: 100%;
  table-layout: fixed;
  border-collapse: separate;
  border-spacing: 0;
  & th, & td {
    padding: 0 2px;
    border-right: 1px solid ${INK};
    border-bottom: 1px solid ${INK};
    text-align: center;
    font-weight: 400;
    white-space: nowrap;
  }
  & th { height: 57px; padding: 0; font-size: 8px; line-height: 9px; white-space: pre-line; }
  & tbody tr { height: 18px; }
  & tbody tr:nth-child(3n + 1) { height: 17px; }
  & td:nth-child(2) { text-align: left; }
`;
const SectionName = styled.u`
  display: block;
  font-size: 8px;
  line-height: 12px;
  text-align: center;
  text-underline-offset: 1px;
`;
const TitleBlock = styled.div`
  display: flex;
  height: 97px;
  border-right: 1px solid ${INK};
  border-bottom: 1px solid ${INK};
  padding-left: 370px;
`;
const RevTable = styled.table`
  width: 115px;
  table-layout: fixed;
  border-collapse: separate;
  border-spacing: 0;
  border-left: 1px solid ${INK};
  line-height: 7px;
  & td {
    padding: 0 0 0 1px;
    border-right: 1px solid ${INK};
    border-bottom: 1px solid ${INK};
    white-space: nowrap;
  }
  & td[align] { padding: 0; }
  & tr { height: 9px; }
  & tr:nth-child(3), & tr:nth-child(8) { height: 8px; }
  & tr:last-child td { border-bottom: 0; }
`;
const DateCell = styled.td`
  background: #b9b9b9;
  font-size: 5px;
`;
const TitleRight = styled.div`
  display: grid;
  flex: 1;
  grid-template-rows: 18px 26px 53px;
  & > * { border-bottom: 1px solid ${INK}; }
  & > :last-child { border-bottom: 0; }
`;
const TitleBottom = styled.div`
  display: grid;
  grid-template-columns: 124px 1fr;
  grid-template-rows: 26px 1fr;
`;
const BlankCell = styled.div`
  border-right: 1px solid ${INK};
  border-bottom: 1px solid ${INK};
  &:nth-child(3) { border-bottom: 0; }
`;
const StageTable = styled.table`
  width: 100%;
  height: 26px;
  table-layout: fixed;
  border-collapse: separate;
  border-spacing: 0;
  line-height: 7px;
  & th, & td { padding: 0; border-right: 1px solid ${INK}; border-bottom: 1px solid ${INK}; font-weight: 400; text-align: center; }
  & th { height: 9px; }
  & tr > :last-child { border-right: 0; }
`;
const Company = styled.div`
  display: flex;
  align-items: center;
  gap: 3px;
  padding-left: 11px;
  font: 700 4px/4px ${gridFont};
  color: #333;
`;
const CompanyText = styled.div`
  white-space: pre-line;
  &::before {
    content: "";
    display: block;
    width: 28px;
    height: 2px;
    margin-bottom: 3px;
    background: #444;
  }
`;
const Format = styled.p`
  height: 8px;
  margin: 0;
  padding-left: 609px;
  line-height: 8px;
`;
const CanvasMark = styled.svg<{ $x: number; $y: number }>`
  position: absolute;
  left: ${p => p.$x}px;
  top: ${p => p.$y}px;
`;

const sheetCols = [35, 230, 106, 61, 80, 35, 35, 44];
const sheetHeads = ["Поз.", "Наименование и\nтехническая характеристика", "Тип, марка,\nобозначение\nдокумента,\nопросного листа", "Код продукции", "Поставщик", "Ед\nизме-\nрения", "Коли-\nчество", "Масса 1 ед.,\nкг", "Примечание\n(Общая масса)"];
const sheetText = `
|#Оборудование и арматура

1.1-1.2|Насос сетевой системы теплоснабжения с внешним|BL 80/150-18.5/2-N31-R||Wilo|шт|2|177|354
|частотным приводом, G=177м3/ч, Н=23,4м.вод.ст., N=15 кВт, n=2935 об/мин|5009.24-ТМ.ОЛ1
2|Клапан предохранительный "Прегран" Рср=0,7 МПа, фланцевый|КПП 496-01-16-ЗН-80х125-7||АДЛ|шт|1|58,48|58,48
3|Клапан обратный межфланцевый DN300, PN16|"Гранлок" CV16||АДЛ|шт|1|42|42
4|Клапан обратный межфланцевый DN200, PN16|"Гранлок" CV16||АДЛ|шт|3|17|51
5|Кран шаровой неполнопроходной приварной с механическим редуктором DN300, PN25|КШ.Ц.П.300/250.025.Н/П.02||LD|шт|5|145,7|728,5
6|Регулирующий осевый кран Regula неполнопроходной приварной с электроприводом МЭОФ|КШ.Ц.П.Э Regula 250/200.025.Н/П.02||LD|шт|1|137|137
|-2500/63-0,25У-96К DN250, PN
7|Кран шаровой неполнопроходный приварной с редуктором DN200, PN25|КШ.Ц.П.200/150.025.Н/П.02||LD|шт|6|44,2|265,2
8|Кран шаровой неполнопроходный приварной DN100, PN25|КШ.Ц.П.100/080.025.Н/П.02||LD|шт|3|6,8|20,4
9|Кран шаровой неполнопроходной приварной DN32, PN40|КШ.Ц.П.032.040.Н/П.02||LD|шт|6|1,1|6,6
10|Кран шаровой неполнопроходной приварной DN20, PN40|КШ.Ц.П.020.040.Н/П.02||LD|шт|5|0,8|4
11|Грязевик горизонтальный DN300, PN16|Серия ТС 565.00.009 (с.5.903-13 вып.5)|||шт|2|390|780
12|Резиновый компенсатор DN100, PN16|КР ARM 100-16-35/15/10 EPDM||Армфлекс|шт|2|8,2|16,4
13|Резиновый компенсатор DN80, PN16|КР ARM 80-16-35/15/10 EPDM||Армфлекс|шт|2|7,3|14,6

`;
const sheetRows = sheetText.split("\n").map(l => {
  const c = l.split("|");
  return Array.from({ length: 9 }, (_, i) => c[i] ?? "");
});
const layoutTabs = ["Модель", "ЗД1.л2. Палн для КИП", "ЗД1.л3. Разрезы для КИП", "Черновик", "МСЧ 1", "МСЧ 2", "Спец-ия угл.", "СО1 л.1", "СО1 л.2", "СО1 л.3", "СО1 л.4", "СО1 л.5", "СО1 л.6"];

const LayoutTabs = styled.div`
  display: flex;
  align-items: center;
  height: 16px;
  padding-left: 2px;
  background: #555;
`;
const LayoutMenu = styled.button`
  width: 26px;
`;
const LayoutTab = styled.button<{ $active?: boolean }>`
  height: 12px;
  padding: 0 4px;
  border-right: 1px solid ${p => (p.$active ? "transparent" : "#8a8a8a")};
  line-height: 12px;
  white-space: nowrap;
  color: ${p => (p.$active ? "#fff" : "#c4c4c4")};
  background: ${p => (p.$active ? "#7f7f7f" : "none")};
`;

const Drawing = () => (
  <RightPane>
    <FileTabs>
      <FileTab>Без имени0</FileTab>
      <FileTab $active>
        01.Площадка.001.ЦТП.3D.Стадия Р.ТМ. Тепломеханические решения.Сетевая вода.04.12.24..dwg*
        <button type="button" aria-label="Закрыть документ"><Icon name="close" size={6} /></button>
      </FileTab>
    </FileTabs>
    <Canvas>
      <SheetShadow />
      <Sheet>
        <Stamps>
          <StampGrid $cols="8px 9px 8px" $rows="17px 27px 35px 35px">
            <StampLabel $span $end>Согласовано</StampLabel>
            {Array.from({ length: 8 }, (_, i) => <StampCell key={i} />)}
          </StampGrid>
          <StampGrid $cols="8px 12px" $rows="43px 62px 44px">
            <StampLabel>Взам. инв. №</StampLabel><StampCell />
            <StampLabel>Подпись и дата</StampLabel><StampCell />
            <StampLabel>Инв. № подл.</StampLabel><StampCell />
          </StampGrid>
        </Stamps>
        <SheetBody>
          <Frame>
            <SheetTable>
              <colgroup>{sheetCols.map((w, i) => <col key={i} width={w} />)}<col /></colgroup>
              <thead><tr>{sheetHeads.map(h => <th key={h}>{h}</th>)}</tr></thead>
              <tbody>
                {sheetRows.map((r, i) => (
                  <tr key={i}>{r.map((c, j) => <td key={j}>{c[0] === "#" ? <SectionName>{c.slice(1)}</SectionName> : c}</td>)}</tr>
                ))}
              </tbody>
            </SheetTable>
            <TitleBlock>
              <RevTable>
                <colgroup>{[17, 17, 18, 18, 27, 17].map((w, i) => <col key={i} width={w} />)}</colgroup>
                <tbody>
                  {[0, 1, 2, 3].map(i => <tr key={i}>{[0, 1, 2, 3, 4, 5].map(j => <td key={j} />)}</tr>)}
                  <tr>{["Изм.", "Кол.уч", "Лист", "№ док.", "Подп.", "Дата"].map(t => <td key={t} align="center">{t}</td>)}</tr>
                  {["Разраб.", "Пров.", "Гл. спец.", "Нач.отдела", "Н. контр.", "ГИП"].map(t => (
                    <tr key={t}><td colSpan={2}>{t}</td><td colSpan={2} /><td /><DateCell align="center">10.02.25</DateCell></tr>
                  ))}
                </tbody>
              </RevTable>
              <TitleRight>
                <div />
                <div />
                <TitleBottom>
                  <BlankCell />
                  <StageTable>
                    <colgroup><col width="26" /><col width="26" /><col /></colgroup>
                    <thead><tr><th>Стадия</th><th>Лист</th><th>Листов</th></tr></thead>
                    <tbody><tr><td /><td /><td /></tr></tbody>
                  </StageTable>
                  <BlankCell />
                  <Company>
                    <svg width="20" height="20" viewBox="0 0 20 20" fill="none" strokeWidth="3">
                      <path d="M3 14A8 8 0 0 1 5 4" stroke="#1b4f9c" /><path d="M4 4A8 8 0 0 1 12 2" stroke="#f7a600" />
                      <path d="M9 3q8-1 9 8" stroke="#e1251b" /><path d="M18 10a8 8 0 0 1-7 8" stroke="#f7a600" /><path d="M12 18a8 8 0 0 1-9-5" stroke="#1b4f9c" />
                    </svg>
                    <CompanyText>{"СИБИРСКАЯ\nГЕНЕРИРУЮЩАЯ\nКОМПАНИЯ\nСИБИРСКИЙ ИНЖИНИРИНГ"}</CompanyText>
                  </Company>
                </TitleBottom>
              </TitleRight>
            </TitleBlock>
          </Frame>
          <Format>Формат А3</Format>
        </SheetBody>
      </Sheet>
      <CanvasMark $x={36} $y={600} width="92" height="124" viewBox="0 0 92 124" aria-label="Оси координат">
        <g fill="none" stroke="#2a2aa0" strokeWidth="1.200"><path d="M12.500 2v107h75.500zM1.500 98.500h22v22h-22z" /></g>
        <g fill="#2a2aa0" fontFamily="Open Sans" fontSize="13"><text x="18" y="49">Y</text><text x="51" y="104">X</text></g>
      </CanvasMark>
      <CanvasMark $x={536} $y={655} width="88" height="88" viewBox="0 0 88 88" aria-label="Курсор">
        <path d="M44.500 0v88M0 43.500h88M41.500 40.500h6v6h-6z" fill="none" stroke="#5a5a5a" />
      </CanvasMark>
    </Canvas>
    <LayoutTabs>
      <LayoutMenu type="button" aria-label="Список листов"><Icon name="sheets" size={11} /></LayoutMenu>
      {layoutTabs.map((t, i) => <LayoutTab key={t} type="button" $active={i === 7}>{t}</LayoutTab>)}
    </LayoutTabs>
  </RightPane>
);

const CommandBar = styled.footer`
  height: 8px;
  padding: 3px 15px 0;
  overflow: hidden;
  border-top: 1px solid #6a6a6a;
  background: #525252;
  font: 8px/8px ${uiFont};
`;

export default function App() {
  return (
    <App$>
      <GlobalStyle />
      <Ribbon />
      <QuickBar>
        <QuickButton type="button" aria-label="Создать"><Icon name="file" size={11} /></QuickButton>
        <QuickButton type="button" aria-label="Открыть"><Icon name="open" size={11} /></QuickButton>
        <QuickButton type="button" aria-label="Сохранить"><Icon name="save" size={11} /></QuickButton>
        <QuickButton type="button" aria-label="Сохранить все"><Icon name="saveAll" size={12} /></QuickButton>
        <QuickButton type="button" aria-label="Отменить"><Icon name="undo" size={10} /><Caret /></QuickButton>
        <QuickButton type="button" aria-label="Повторить"><Icon name="redo" size={10} /><Caret /></QuickButton>
        <QuickButton type="button" aria-label="Печать"><Icon name="print" size={12} /></QuickButton>
        <QuickButton type="button" aria-label="Настроить панель"><Icon name="chevrons" size={8} /></QuickButton>
      </QuickBar>
      <Workspace>
        <Specification />
        <Splitter />
        <Drawing />
      </Workspace>
      <CommandBar>МОДЕЛЬ: КОМПОНОВКА.DWG</CommandBar>
    </App$>
  );
}
